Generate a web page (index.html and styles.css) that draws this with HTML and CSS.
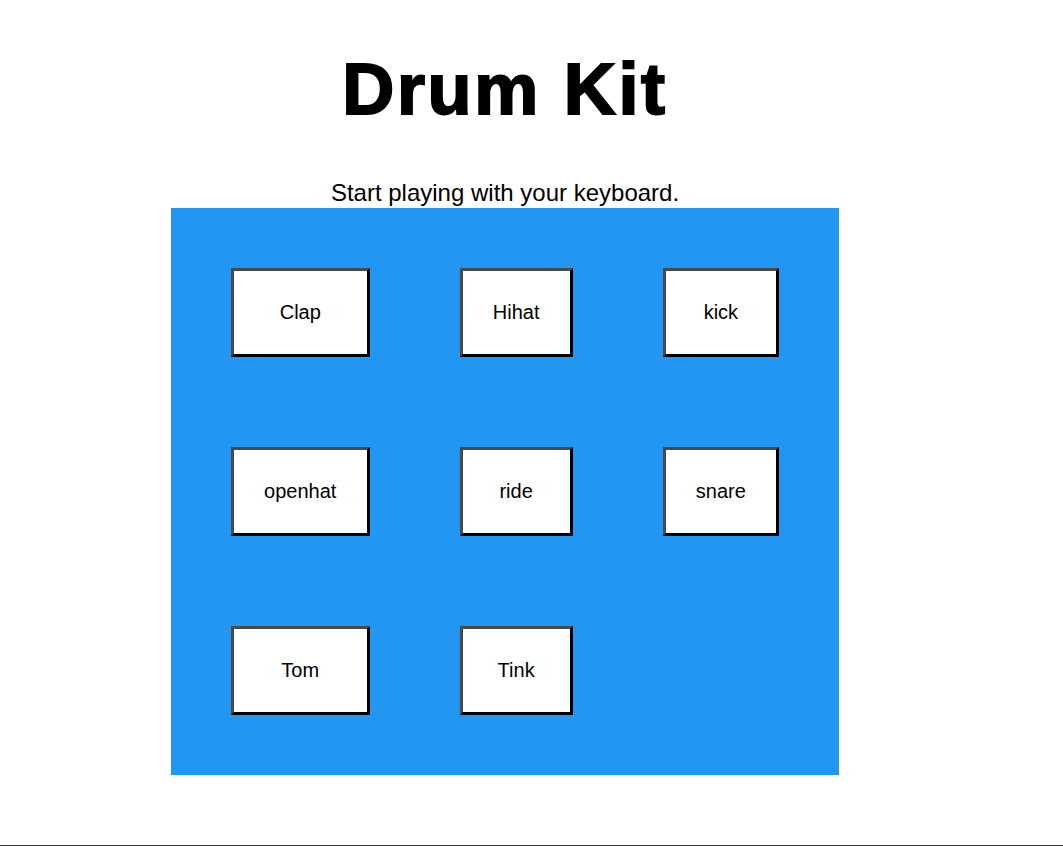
FILE: index.html
```html
<!DOCTYPE html>
<html lang="en">
<head>
<meta charset="utf-8">
<title>Drum Kit</title>
<link rel="stylesheet" href="styles.css">
</head>
<body>
<div class="frame">
  <div class="page">
    <h1 class="title">Drum Kit</h1>
    <p class="subtitle">Start playing with your keyboard.</p>
    <div class="kit">
      <button class="pad">Clap</button>
      <button class="pad">Hihat</button>
      <button class="pad">kick</button>
      <button class="pad">openhat</button>
      <button class="pad">ride</button>
      <button class="pad">snare</button>
      <button class="pad">Tom</button>
      <button class="pad">Tink</button>
    </div>
  </div>
</div>
</body>
</html>
```
FILE: styles.css
```css
html, body {
  margin: 0;
  padding: 0;
  background: #ffffff;
}
body {
  font-family: "Liberation Sans", Arial, sans-serif;
  color: #000000;
}
.frame {
  height: 845px;
  border-bottom: 1px solid #3a3a3a;
}
.page {
  width: 1010px;
  display: flex;
  flex-direction: column;
  align-items: center;
}
.title {
  margin: 53px 0 0 0;
  font-size: 72px;
  line-height: 72px;
  font-weight: 900;
  letter-spacing: 2.7px;
  -webkit-text-stroke: 2px #000;
}
.subtitle {
  margin: 54px 0 0 0;
  font-size: 24px;
  line-height: 27px;
}
.kit {
  margin-top: 2px;
  background: #2196f3;
  padding: 60px;
  display: grid;
  grid-template-columns: repeat(3, auto);
  gap: 90px;
}
.pad {
  font-family: "Liberation Sans", Arial, sans-serif;
  font-size: 20px;
  line-height: 23px;
  color: #000;
  background: #ffffff;
  padding: 30px 30.2px;
  border-style: solid;
  border-width: 3px;
  border-color: #4a4a4a #000000 #000000 #4a4a4a;
  margin: 0;
}
```
